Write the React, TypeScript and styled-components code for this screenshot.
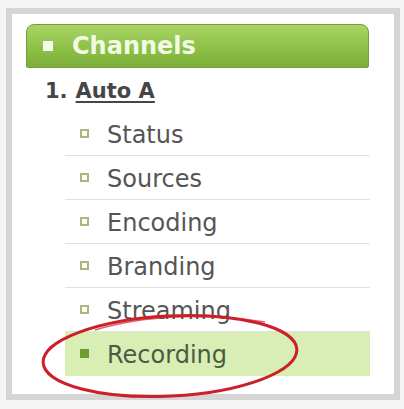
import React from "react";
import styled, { createGlobalStyle } from "styled-components";

const GlobalStyle = createGlobalStyle`
  html, body {
    margin: 0;
    padding: 0;
    background: #f5f5f5;
  }
  body {
    font-family: "DejaVu Sans", Verdana, sans-serif;
  }
`;

const Frame = styled.div`
  position: relative;
  margin: 8px 0 0 6px;
  width: 368px;
  height: 370px;
  border: 6px solid #d5d5d5;
  background: #ffffff;
  padding: 10px 0 0 14px;
  box-sizing: content-box;
`;

const Inner = styled.div`
  width: 343px;
`;

const Header = styled.div`
  height: 42px;
  display: flex;
  align-items: center;
  gap: 19px;
  padding-left: 16px;
  border: 1px solid #73a03a;
  border-radius: 8px 8px 2px 2px;
  background: linear-gradient(#a9d465, #8cbf45 60%, #7cae3a);
  color: #f2fae6;
  font-weight: bold;
  font-size: 24px;
`;

const HeaderDot = styled.span`
  width: 10px;
  height: 10px;
  background: #f4fbe8;
`;

const Channel = styled.div`
  height: 44px;
  display: flex;
  align-items: center;
  padding: 2px 0 0 19px;
  box-sizing: border-box;
  font-size: 21px;
  font-weight: bold;
  color: #464646;

  a {
    color: inherit;
    margin-left: 8px;
    text-decoration: underline;
    text-underline-offset: 3px;
  }
`;

const List = styled.ul`
  list-style: none;
  margin: 0 0 0 39px;
  padding: 0;
  width: 305px;
`;

const Item = styled.li<{ $active?: boolean }>`
  height: 44px;
  box-sizing: border-box;
  display: flex;
  align-items: center;
  gap: 18px;
  padding: 3px 0 0 15px;
  border-bottom: 1px solid ${(p) => (p.$active ? "transparent" : "#e2e2e2")};
  background: ${(p) => (p.$active ? "#d8eeb4" : "transparent")};
  font-size: 24px;
  color: ${(p) => (p.$active ? "#4d5a42" : "#555555")};
`;

const Bullet = styled.span<{ $active?: boolean }>`
  width: ${(p) => (p.$active ? 9 : 5)}px;
  height: ${(p) => (p.$active ? 9 : 5)}px;
  margin-top: -3px;
  border: ${(p) => (p.$active ? "0" : "2px solid #a7b878")};
  background: ${(p) => (p.$active ? "#6e9d34" : "#ffffff")};
  flex-shrink: 0;
`;

const Circle = styled.svg`
  position: absolute;
  left: -12px;
  top: -14px;
  pointer-events: none;
`;

const items = ["Status", "Sources", "Encoding", "Branding", "Streaming", "Recording"];

export default function App() {
  return (
    <>
      <GlobalStyle />
      <Frame>
        <Inner>
          <Header>
            <HeaderDot />
            Channels
          </Header>
          <Channel>
            1.<a>Auto A</a>
          </Channel>
          <List>
            {items.map((name) => {
              const active = name === "Recording";
              return (
                <Item key={name} $active={active}>
                  <Bullet $active={active} />
                  {name}
                </Item>
              );
            })}
          </List>
        </Inner>
        <Circle width="404" height="409" viewBox="0 0 404 409">
          <ellipse
            cx="170"
            cy="356"
            rx="127"
            ry="40"
            transform="rotate(-3 170 356)"
            fill="none"
            stroke="#cc1f2a"
            strokeWidth="3"
          />
          <path
            d="M 95 330 Q 170 308 265 322"
            fill="none"
            stroke="#cc1f2a"
            strokeWidth="1.5"
            opacity="0.7"
          />
        </Circle>
      </Frame>
    </>
  );
}
